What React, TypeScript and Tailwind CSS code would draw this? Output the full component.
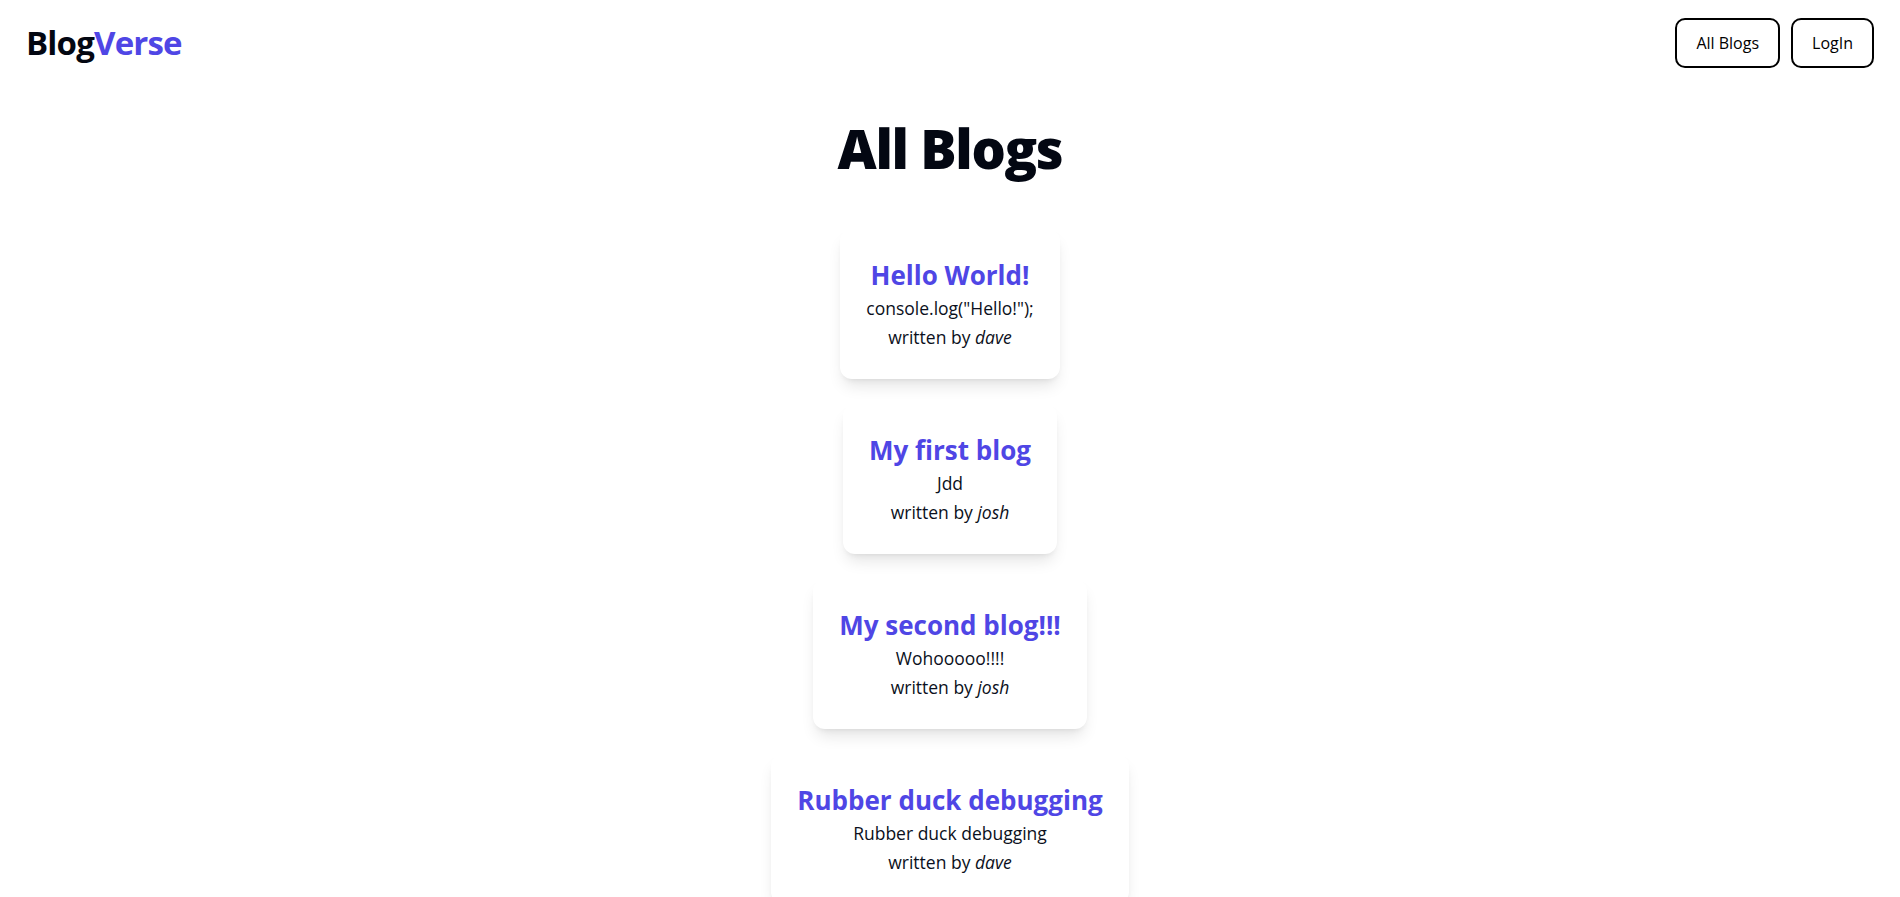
const blogs = [
  { id: 1, title: 'Hello World!', body: 'console.log("Hello!");', author: 'dave' },
  { id: 2, title: 'My first blog', body: 'Jdd', author: 'josh' },
  { id: 3, title: 'My second blog!!!', body: 'Wohooooo!!!!', author: 'josh' },
  { id: 4, title: 'Rubber duck debugging', body: 'Rubber duck debugging', author: 'dave' },
];

function Navbar() {
  return (
    <nav className="flex items-center justify-between px-[26px] py-[18px]">
      <a href="#" className="text-[33px] font-bold tracking-tight text-gray-950">
        Blog<span className="text-[#4f46e5]">Verse</span>
      </a>
      <div className="flex gap-[11px]">
        <a href="#" className="rounded-[10px] border-2 border-black px-[19px] py-[11px] text-base leading-6 text-black">
          All Blogs
        </a>
        <a href="#" className="rounded-[10px] border-2 border-black px-[19px] py-[11px] text-base leading-6 text-black">
          LogIn
        </a>
      </div>
    </nav>
  );
}

export default function App() {
  return (
    <div className="min-h-screen bg-white text-[#0b1020]" style={{ fontFamily: '"Open Sans", "Noto Sans", sans-serif' }}>
      <Navbar />
      <main className="flex flex-col items-center">
        <h1 className="mt-[38px] mb-[57px] text-[54px] leading-[48px] font-extrabold tracking-tight text-gray-950">
          All Blogs
        </h1>
        <div className="flex flex-col items-center gap-[25px] pb-10">
          {blogs.map(b => (
            <div key={b.id} className="flex flex-col items-center rounded-xl bg-white px-[26px] pt-[27px] pb-[27px] text-center shadow-lg">
              <h2 className="text-[26px] leading-[38px] font-bold text-[#4f46e5]">{b.title}</h2>
              <p className="text-[17.5px] leading-[29px]">{b.body}</p>
              <p className="text-[17.5px] leading-[29px]">
                written by <i>{b.author}</i>
              </p>
            </div>
          ))}
        </div>
      </main>
    </div>
  );
}
